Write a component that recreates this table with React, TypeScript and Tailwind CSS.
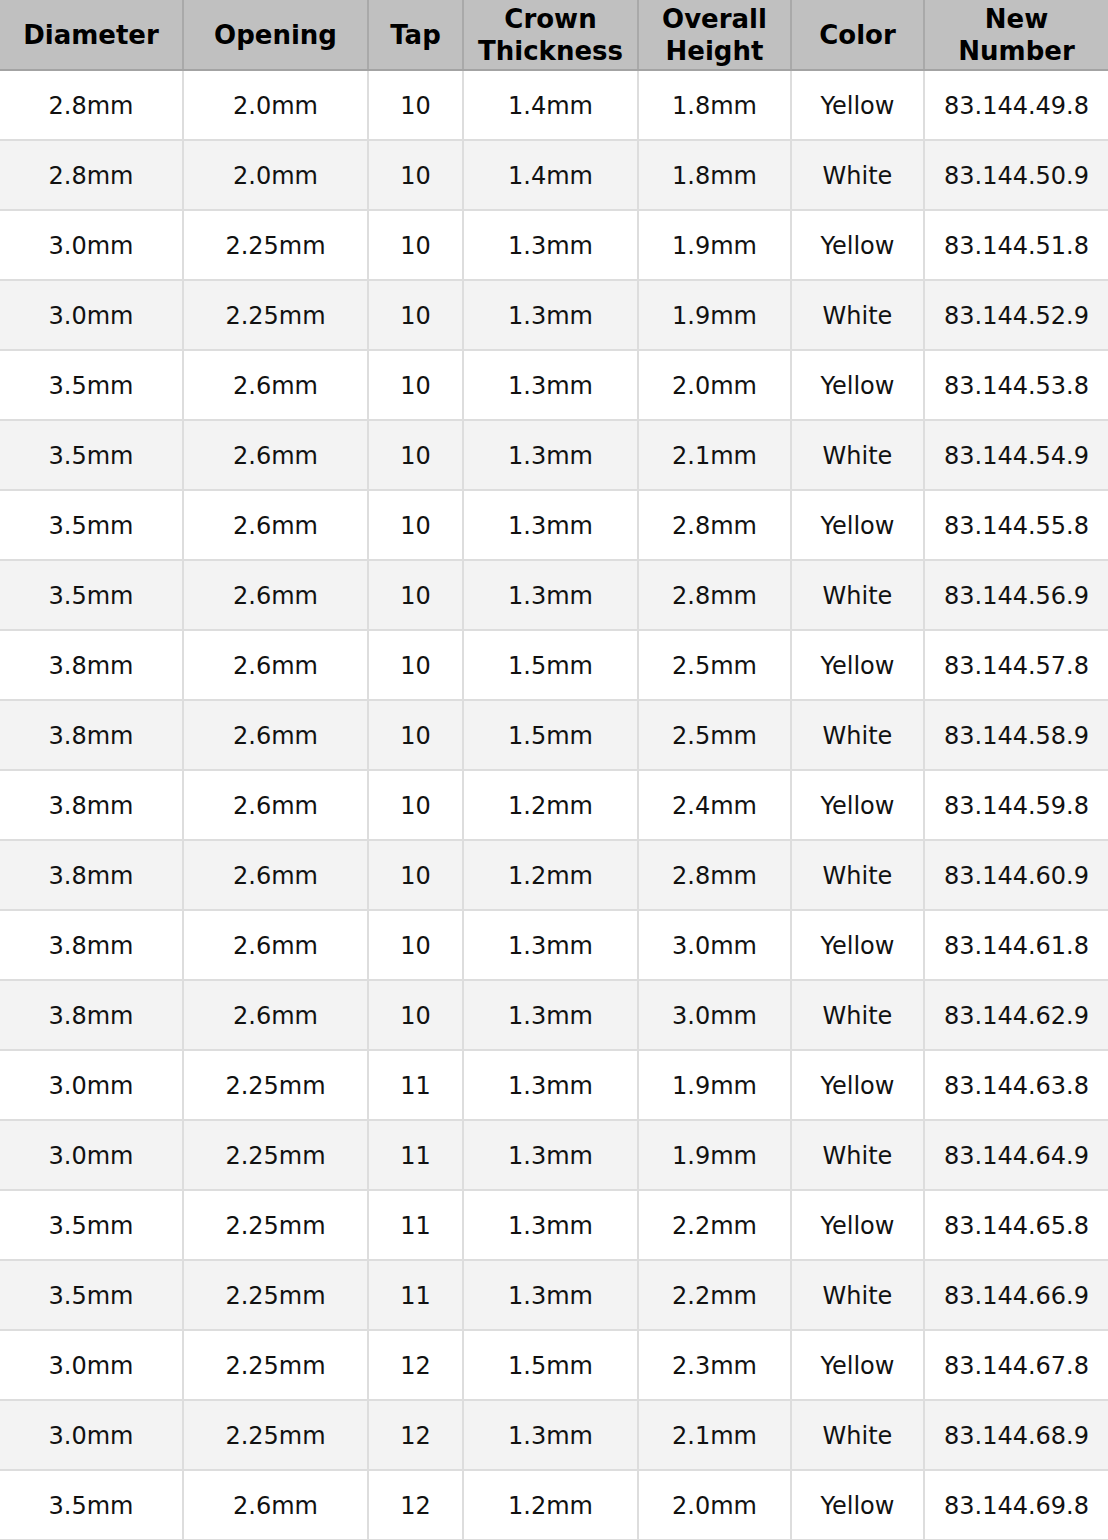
const rows: string[][] = [
  ["2.8mm", "2.0mm", "10", "1.4mm", "1.8mm", "Yellow", "83.144.49.8"],
  ["2.8mm", "2.0mm", "10", "1.4mm", "1.8mm", "White", "83.144.50.9"],
  ["3.0mm", "2.25mm", "10", "1.3mm", "1.9mm", "Yellow", "83.144.51.8"],
  ["3.0mm", "2.25mm", "10", "1.3mm", "1.9mm", "White", "83.144.52.9"],
  ["3.5mm", "2.6mm", "10", "1.3mm", "2.0mm", "Yellow", "83.144.53.8"],
  ["3.5mm", "2.6mm", "10", "1.3mm", "2.1mm", "White", "83.144.54.9"],
  ["3.5mm", "2.6mm", "10", "1.3mm", "2.8mm", "Yellow", "83.144.55.8"],
  ["3.5mm", "2.6mm", "10", "1.3mm", "2.8mm", "White", "83.144.56.9"],
  ["3.8mm", "2.6mm", "10", "1.5mm", "2.5mm", "Yellow", "83.144.57.8"],
  ["3.8mm", "2.6mm", "10", "1.5mm", "2.5mm", "White", "83.144.58.9"],
  ["3.8mm", "2.6mm", "10", "1.2mm", "2.4mm", "Yellow", "83.144.59.8"],
  ["3.8mm", "2.6mm", "10", "1.2mm", "2.8mm", "White", "83.144.60.9"],
  ["3.8mm", "2.6mm", "10", "1.3mm", "3.0mm", "Yellow", "83.144.61.8"],
  ["3.8mm", "2.6mm", "10", "1.3mm", "3.0mm", "White", "83.144.62.9"],
  ["3.0mm", "2.25mm", "11", "1.3mm", "1.9mm", "Yellow", "83.144.63.8"],
  ["3.0mm", "2.25mm", "11", "1.3mm", "1.9mm", "White", "83.144.64.9"],
  ["3.5mm", "2.25mm", "11", "1.3mm", "2.2mm", "Yellow", "83.144.65.8"],
  ["3.5mm", "2.25mm", "11", "1.3mm", "2.2mm", "White", "83.144.66.9"],
  ["3.0mm", "2.25mm", "12", "1.5mm", "2.3mm", "Yellow", "83.144.67.8"],
  ["3.0mm", "2.25mm", "12", "1.3mm", "2.1mm", "White", "83.144.68.9"],
  ["3.5mm", "2.6mm", "12", "1.2mm", "2.0mm", "Yellow", "83.144.69.8"],
];

const headers: [string, string | null][] = [
  ["Diameter", null],
  ["Opening", null],
  ["Tap", null],
  ["Crown", "Thickness"],
  ["Overall", "Height"],
  ["Color", null],
  ["New", "Number"],
];

export default function App() {
  return (
    <div className="w-[1108px] bg-white font-['DejaVu_Sans',sans-serif] text-[#111]">
      <table className="w-[1108px] table-fixed border-collapse">
        <colgroup>
          <col className="w-[183px]" />
          <col className="w-[185px]" />
          <col className="w-[95px]" />
          <col className="w-[175px]" />
          <col className="w-[153px]" />
          <col className="w-[133px]" />
          <col className="w-[184px]" />
        </colgroup>
        <thead>
          <tr className="h-[70px] bg-[#c0c0c0]">
            {headers.map(([a, b], i) => (
              <th
                key={i}
                className={`border-b-2 border-b-[#a3a3a3] p-0 pt-[1px] text-center align-middle text-[26px] font-bold leading-[32px] text-black ${
                  i < headers.length - 1 ? "border-r-2 border-r-[#a9a9a9]" : ""
                }`}
              >
                {a}
                {b && (
                  <>
                    <br />
                    {b}
                  </>
                )}
              </th>
            ))}
          </tr>
        </thead>
        <tbody>
          {rows.map((r, ri) => (
            <tr
              key={ri}
              className={`h-[70px] ${ri % 2 === 1 ? "bg-[#f3f3f3]" : "bg-white"}`}
            >
              {r.map((c, ci) => (
                <td
                  key={ci}
                  className={`border-b-2 border-b-[#dddddd] p-0 pt-[2px] text-center align-middle text-[24px] leading-[28px] ${
                    ci < r.length - 1 ? "border-r-2 border-r-[#dddddd]" : ""
                  }`}
                >
                  {c}
                </td>
              ))}
            </tr>
          ))}
        </tbody>
      </table>
    </div>
  );
}
